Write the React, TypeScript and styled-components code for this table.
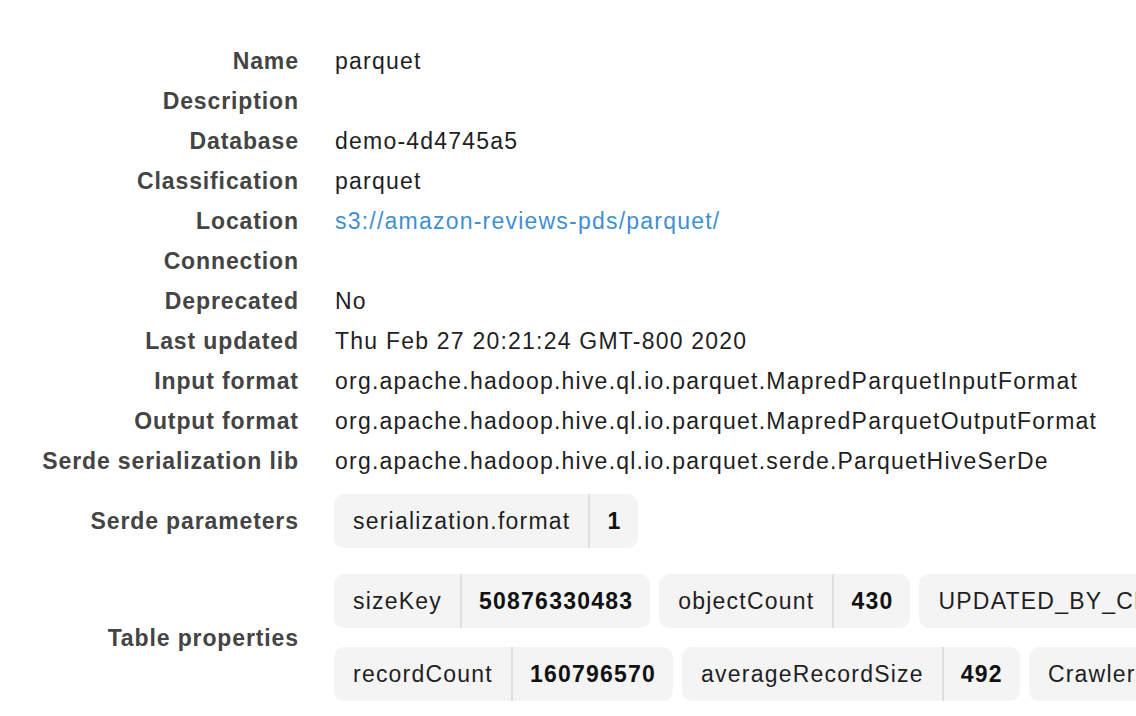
import React, { FC } from 'react';
import styled, { createGlobalStyle } from 'styled-components';

const GlobalStyle = createGlobalStyle`
  html, body {
    margin: 0;
    padding: 0;
    background: #fff;
    overflow: hidden;
  }
  body {
    font-family: "Liberation Sans", Arial, Helvetica, sans-serif;
    font-size: 23px;
    letter-spacing: 0.053em;
    color: #222;
  }
`;

interface IField {
  label: string;
  value?: string;
  href?: string;
}

const fields: IField[] = [
  { label: 'Name', value: 'parquet' },
  { label: 'Description' },
  { label: 'Database', value: 'demo-4d4745a5' },
  { label: 'Classification', value: 'parquet' },
  { label: 'Location', value: 's3://amazon-reviews-pds/parquet/', href: '#' },
  { label: 'Connection' },
  { label: 'Deprecated', value: 'No' },
  { label: 'Last updated', value: 'Thu Feb 27 20:21:24 GMT-800 2020' },
  { label: 'Input format', value: 'org.apache.hadoop.hive.ql.io.parquet.MapredParquetInputFormat' },
  { label: 'Output format', value: 'org.apache.hadoop.hive.ql.io.parquet.MapredParquetOutputFormat' },
  { label: 'Serde serialization lib', value: 'org.apache.hadoop.hive.ql.io.parquet.serde.ParquetHiveSerDe' },
];

type Pair = [string, string];

const serdeParams: Pair[][] = [[['serialization.format', '1']]];

// rows as they wrap in the console
const tableProps: Pair[][] = [
  [
    ['sizeKey', '50876330483'],
    ['objectCount', '430'],
    ['UPDATED_BY_CRAWLER', 'demo-crawler'],
  ],
  [
    ['recordCount', '160796570'],
    ['averageRecordSize', '492'],
    ['CrawlerSchemaDeserializerVersion', '1.0'],
  ],
];

const Details: FC = () => {
  return (
    <Page>
      <GlobalStyle />
      <Grid>
        {fields.map((f) => (
          <React.Fragment key={f.label}>
            <Label>{f.label}</Label>
            <Value>{f.href ? <Link href={f.href}>{f.value}</Link> : f.value}</Value>
          </React.Fragment>
        ))}
        <Label>Serde parameters</Label>
        <PillBlock rows={serdeParams} />
        <Label>Table properties</Label>
        <PillBlock rows={tableProps} />
      </Grid>
    </Page>
  );
};

const PillBlock: FC<{ rows: Pair[][] }> = ({ rows }) => (
  <PillRows>
    {rows.map((row, i) => (
      <PillLine key={i}>
        {row.map(([k, v]) => (
          <Pill key={k}>
            <PillKey>{k}</PillKey>
            <PillValue>{v}</PillValue>
          </Pill>
        ))}
      </PillLine>
    ))}
  </PillRows>
);

const Page = styled.div`
  padding-top: 41px;
  width: 2400px;
`;

const Grid = styled.div`
  display: grid;
  grid-template-columns: 298px 1fr;
  column-gap: 37px;
  align-items: center;
`;

const Label = styled.div`
  text-align: right;
  font-weight: bold;
  letter-spacing: 0.038em;
  color: #444;
  line-height: 40px;
  white-space: nowrap;
  margin-right: -0.038em;
`;

const Value = styled.div`
  line-height: 40px;
  min-height: 40px;
  color: #1f1f1f;
  white-space: nowrap;
`;

const Link = styled.a`
  color: #3f8fd2;
  text-decoration: none;
`;

const PillRows = styled.div`
  display: flex;
  flex-direction: column;
  gap: 19px;
  padding: 13px 0;
  margin-left: -1px;
`;

const PillLine = styled.div`
  display: flex;
  gap: 9px;
`;

const Pill = styled.div`
  display: flex;
  align-items: stretch;
  height: 54px;
  background: #f4f4f4;
  border-radius: 10px;
  white-space: nowrap;
`;

const PillKey = styled.span`
  display: flex;
  align-items: center;
  padding: 0 18px 0 19px;
  color: #1f1f1f;
  border-right: 2px solid #dedede;
`;

const PillValue = styled.span`
  display: flex;
  align-items: center;
  padding: 0 17px 0 17px;
  font-weight: bold;
  color: #111;
`;

export default Details;
